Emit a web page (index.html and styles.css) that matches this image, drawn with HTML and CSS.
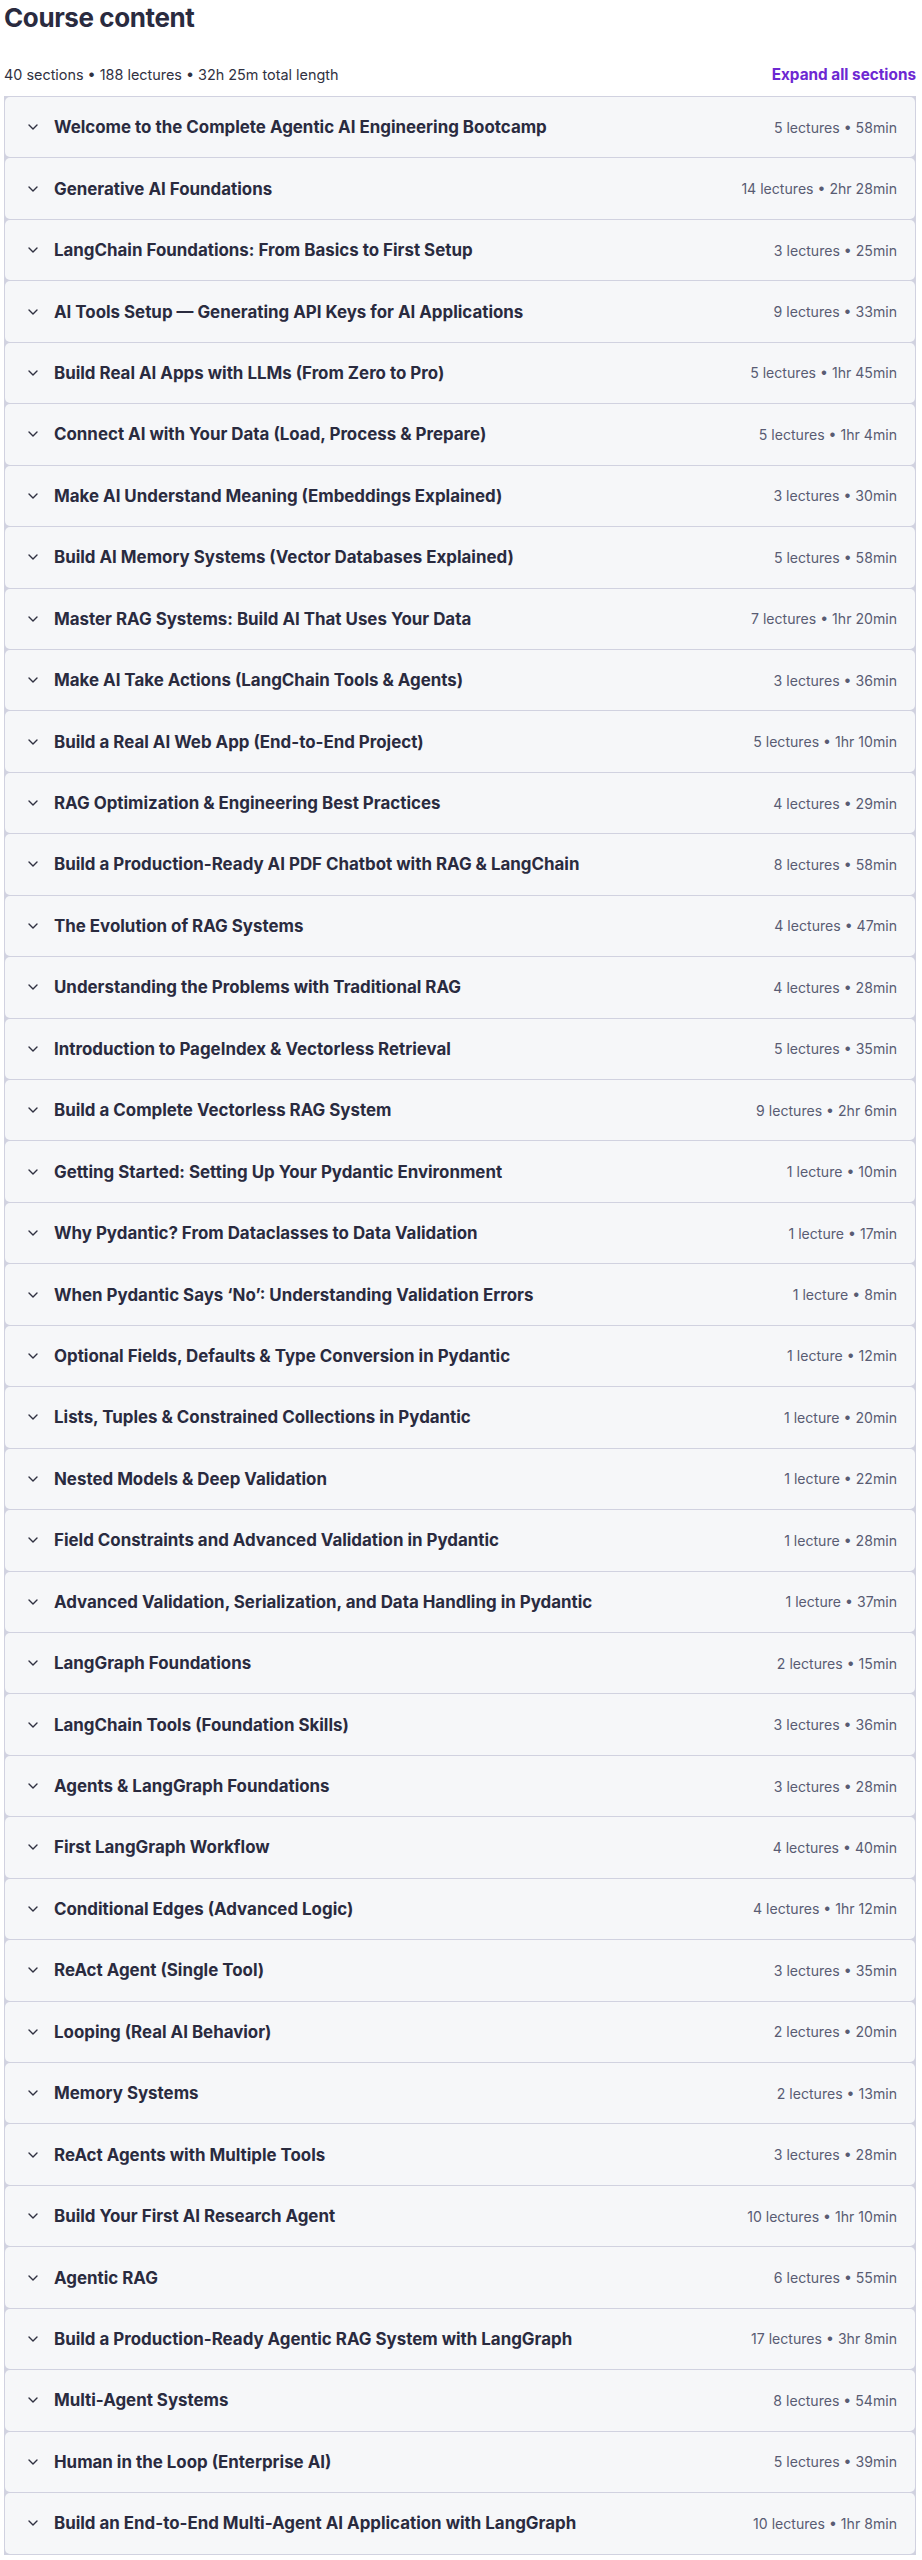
FILE: index.html
```html
<!DOCTYPE html>
<html lang="en">
<head>
<meta charset="utf-8">
<title>Course content</title>
<link rel="stylesheet" href="styles.css">
</head>
<body>
<div class="page">
  <h2 class="title">Course content</h2>
  <div class="meta-bar">
    <span class="meta">40 sections • 188 lectures • 32h 25m total length</span>
    <button class="expand">Expand all sections</button>
  </div>
  <div class="sections" id="sections"></div>
</div>
<script src="app.js"></script>
</body>
</html>
```

FILE: app.js
```js
const data = [
  ["Welcome to the Complete Agentic AI Engineering Bootcamp", "5 lectures • 58min"],
  ["Generative AI Foundations", "14 lectures • 2hr 28min"],
  ["LangChain Foundations: From Basics to First Setup", "3 lectures • 25min"],
  ["AI Tools Setup — Generating API Keys for AI Applications", "9 lectures • 33min"],
  ["Build Real AI Apps with LLMs (From Zero to Pro)", "5 lectures • 1hr 45min"],
  ["Connect AI with Your Data (Load, Process & Prepare)", "5 lectures • 1hr 4min"],
  ["Make AI Understand Meaning (Embeddings Explained)", "3 lectures • 30min"],
  ["Build AI Memory Systems (Vector Databases Explained)", "5 lectures • 58min"],
  ["Master RAG Systems: Build AI That Uses Your Data", "7 lectures • 1hr 20min"],
  ["Make AI Take Actions (LangChain Tools & Agents)", "3 lectures • 36min"],
  ["Build a Real AI Web App (End-to-End Project)", "5 lectures • 1hr 10min"],
  ["RAG Optimization & Engineering Best Practices", "4 lectures • 29min"],
  ["Build a Production-Ready AI PDF Chatbot with RAG & LangChain", "8 lectures • 58min"],
  ["The Evolution of RAG Systems", "4 lectures • 47min"],
  ["Understanding the Problems with Traditional RAG", "4 lectures • 28min"],
  ["Introduction to PageIndex & Vectorless Retrieval", "5 lectures • 35min"],
  ["Build a Complete Vectorless RAG System", "9 lectures • 2hr 6min"],
  ["Getting Started: Setting Up Your Pydantic Environment", "1 lecture • 10min"],
  ["Why Pydantic? From Dataclasses to Data Validation", "1 lecture • 17min"],
  ["When Pydantic Says \u2018No\u2019: Understanding Validation Errors", "1 lecture • 8min"],
  ["Optional Fields, Defaults & Type Conversion in Pydantic", "1 lecture • 12min"],
  ["Lists, Tuples & Constrained Collections in Pydantic", "1 lecture • 20min"],
  ["Nested Models & Deep Validation", "1 lecture • 22min"],
  ["Field Constraints and Advanced Validation in Pydantic", "1 lecture • 28min"],
  ["Advanced Validation, Serialization, and Data Handling in Pydantic", "1 lecture • 37min"],
  ["LangGraph Foundations", "2 lectures • 15min"],
  ["LangChain Tools (Foundation Skills)", "3 lectures • 36min"],
  ["Agents & LangGraph Foundations", "3 lectures • 28min"],
  ["First LangGraph Workflow", "4 lectures • 40min"],
  ["Conditional Edges (Advanced Logic)", "4 lectures • 1hr 12min"],
  ["ReAct Agent (Single Tool)", "3 lectures • 35min"],
  ["Looping (Real AI Behavior)", "2 lectures • 20min"],
  ["Memory Systems", "2 lectures • 13min"],
  ["ReAct Agents with Multiple Tools", "3 lectures • 28min"],
  ["Build Your First AI Research Agent", "10 lectures • 1hr 10min"],
  ["Agentic RAG", "6 lectures • 55min"],
  ["Build a Production-Ready Agentic RAG System with LangGraph", "17 lectures • 3hr 8min"],
  ["Multi-Agent Systems", "8 lectures • 54min"],
  ["Human in the Loop (Enterprise AI)", "5 lectures • 39min"],
  ["Build an End-to-End Multi-Agent AI Application with LangGraph", "10 lectures • 1hr 8min"]
];
const list = document.getElementById("sections");
const chevron = '<svg class="chev" width="10" height="6" viewBox="0 0 10 6" aria-hidden="true"><path d="M1 1 L5 5 L9 1" fill="none" stroke="#303141" stroke-width="1.4" stroke-linecap="round" stroke-linejoin="round"/></svg>';
data.forEach(([t, c]) => {
  const row = document.createElement("div");
  row.className = "section";
  row.innerHTML = chevron + '<span class="sec-title"></span><span class="sec-info"></span>';
  row.querySelector(".sec-title").textContent = t;
  row.querySelector(".sec-info").textContent = c;
  list.appendChild(row);
});
```

FILE: styles.css
```css
* { box-sizing: border-box; }
html, body { margin: 0; padding: 0; background: #ffffff; }
body {
  font-family: Inter, "Noto Sans", "Liberation Sans", sans-serif;
  color: #303141;
}
.page {
  padding: 0 6px 0 4px;
}
.title {
  margin: 0;
  font-size: 26px;
  line-height: 36px;
  font-weight: 700;
  letter-spacing: -0.4px;
  color: #2a2b3f;
}
.meta-bar {
  display: flex;
  justify-content: space-between;
  align-items: center;
  height: 22px;
  margin-top: 27px;
  margin-bottom: 11px;
}
.meta {
  font-size: 14.4px;
  color: #303141;
}
.expand {
  border: 0;
  background: none;
  padding: 0;
  font-family: inherit;
  font-size: 15.3px;
  font-weight: 700;
  color: #6d28d2;
}
.sections {
  display: flex;
  flex-direction: column;
  gap: 1px;
  background: #d1d2e0;
  border: 1px solid #d1d2e0;
}
.section {
  display: flex;
  align-items: center;
  height: 60.45px;
  padding: 0 18px 0 23px;
  background: #f6f7f9;
  border-radius: 5px;
}
.chev { flex: none; margin-right: 16px; }
.sec-title {
  flex: 1;
  font-size: 16.9px;
  font-weight: 700;
  color: #2a2b3f;
}
.sec-info {
  flex: none;
  font-size: 14.1px;
  color: #595c73;
}
```
